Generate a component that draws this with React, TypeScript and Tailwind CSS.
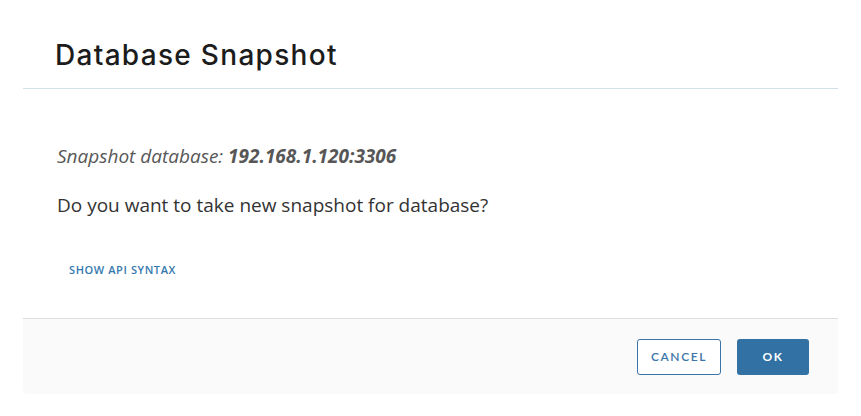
export default function App() {
  return (
    <div className="w-[861px] h-[416px] bg-white overflow-hidden">
      <div className="ml-[23px] w-[815px] bg-white rounded-b-[3px]">
        {/* header */}
        <div className="h-[89px] pl-[32px] pt-[41px] border-b border-[#cfe2ea]">
          <h1 className="text-[28px] leading-none font-medium text-[#1c1c1c] font-['Inter',sans-serif] tracking-[1.3px]">
            Database Snapshot
          </h1>
        </div>
        {/* body */}
        <div className="pl-[34px] pt-[54px] pb-[42px] font-['Open_Sans',sans-serif]">
          <p className="text-[19px] leading-[26px] italic text-[#575757]">
            Snapshot database: <b className="font-bold">192.168.1.120:3306</b>
          </p>
          <p className="mt-[23px] text-[19px] leading-[26px] text-[#333333]">
            Do you want to take new snapshot for database?
          </p>
          <button className="block mt-[46px] ml-[12px] text-[11px] leading-[12px] font-semibold tracking-[0.6px] text-[#3578ae]">
            SHOW API SYNTAX
          </button>
        </div>
        {/* footer */}
        <div className="h-[76px] bg-[#fafafa] border-t border-[#dddddd] rounded-b-[4px] flex items-center justify-end gap-[16px] pr-[29px]">
          <button className="h-[36px] w-[84px] rounded-[3px] border border-[#3a74a8] bg-white text-[12px] font-semibold tracking-[1.6px] text-[#3a74a8] font-['Lato',sans-serif]">
            CANCEL
          </button>
          <button className="h-[36px] w-[72px] rounded-[3px] bg-[#3171a3] text-[12px] font-bold tracking-[1.6px] text-white font-['Lato',sans-serif]">
            OK
          </button>
        </div>
      </div>
    </div>
  );
}
